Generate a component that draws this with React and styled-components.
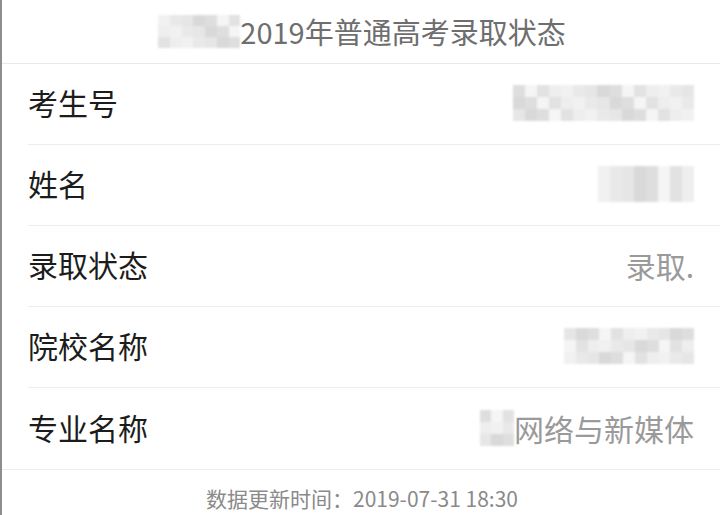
import React from "react";
import styled, { createGlobalStyle } from "styled-components";

const Global = createGlobalStyle`
  html, body { margin: 0; padding: 0; background: #fff; }
  body { font-family: "Noto Sans CJK SC", "Noto Sans", sans-serif; }
`;

const Page = styled.div`
  width: 720px;
  height: 515px;
  box-sizing: border-box;
  border-left: 2px solid #8d8d8d;
  background: #fff;
  overflow: hidden;
`;

const Header = styled.div`
  height: 64px;
  box-sizing: border-box;
  border-bottom: 1px solid #e9e9e9;
  display: flex;
  align-items: center;
  justify-content: center;
  padding-left: 2px;
  font-size: 29px;
  line-height: 1;
  color: #6e6e6e;
`;

const List = styled.div`
  border-bottom: 1px solid #ececec;
`;

const Row = styled.div`
  height: 81px;
  box-sizing: border-box;
  margin-left: 26px;
  padding-right: 26px;
  display: flex;
  align-items: center;
  justify-content: space-between;
  border-bottom: ${(p) => (p.$last ? "none" : "1px solid #ececec")};
`;

const Label = styled.span`
  font-size: 30px;
  line-height: 1;
  color: #1c1c1c;
  margin-top: -4px;
`;

const Value = styled.span`
  display: flex;
  align-items: center;
  font-size: 30px;
  line-height: 1;
  color: #9a9a9a;
  margin-top: -2px;
`;

const Mosaic = styled.div`
  display: grid;
  grid-template-columns: repeat(${(p) => p.$cols}, 1fr);
  grid-template-rows: repeat(${(p) => p.$rows}, 1fr);
  width: ${(p) => p.$w}px;
  height: ${(p) => p.$h}px;
  filter: blur(1px);
  flex-shrink: 0;
`;

const Cell = styled.span`
  background: ${(p) => p.$shade};
`;

const Footer = styled.div`
  text-align: center;
  padding-top: 18px;
  padding-left: 2px;
  font-size: 21px;
  line-height: 1;
  color: #8a8a8a;
`;

const palette = ["#f1f1f1", "#e9e9e9", "#e2e2e2", "#eeeeee", "#dedede", "#f5f5f5", "#e6e6e6", "#d9d9d9"];

function Blur({ w, h, cols, rows, seed = 1 }) {
  const cells = [];
  let s = seed;
  for (let i = 0; i < cols * rows; i++) {
    s = (s * 9301 + 49297) % 233280;
    cells.push(<Cell key={i} $shade={palette[s % palette.length]} />);
  }
  return (
    <Mosaic $w={w} $h={h} $cols={cols} $rows={rows}>
      {cells}
    </Mosaic>
  );
}

export default function App() {
  return (
    <>
      <Global />
      <Page>
        <Header>
          <Blur w={82} h={34} cols={7} rows={3} seed={3} />
          <span>2019年普通高考录取状态</span>
        </Header>
        <List>
          <Row>
            <Label>考生号</Label>
            <Value>
              <Blur w={181} h={36} cols={15} rows={3} seed={7} />
            </Value>
          </Row>
          <Row>
            <Label>姓名</Label>
            <Value>
              <Blur w={96} h={36} cols={8} rows={3} seed={11} />
            </Value>
          </Row>
          <Row>
            <Label>录取状态</Label>
            <Value>录取.</Value>
          </Row>
          <Row>
            <Label>院校名称</Label>
            <Value>
              <Blur w={130} h={36} cols={11} rows={3} seed={17} />
            </Value>
          </Row>
          <Row $last>
            <Label>专业名称</Label>
            <Value>
              <Blur w={34} h={36} cols={3} rows={3} seed={23} />
              网络与新媒体
            </Value>
          </Row>
        </List>
        <Footer>数据更新时间：2019-07-31 18:30</Footer>
      </Page>
    </>
  );
}
